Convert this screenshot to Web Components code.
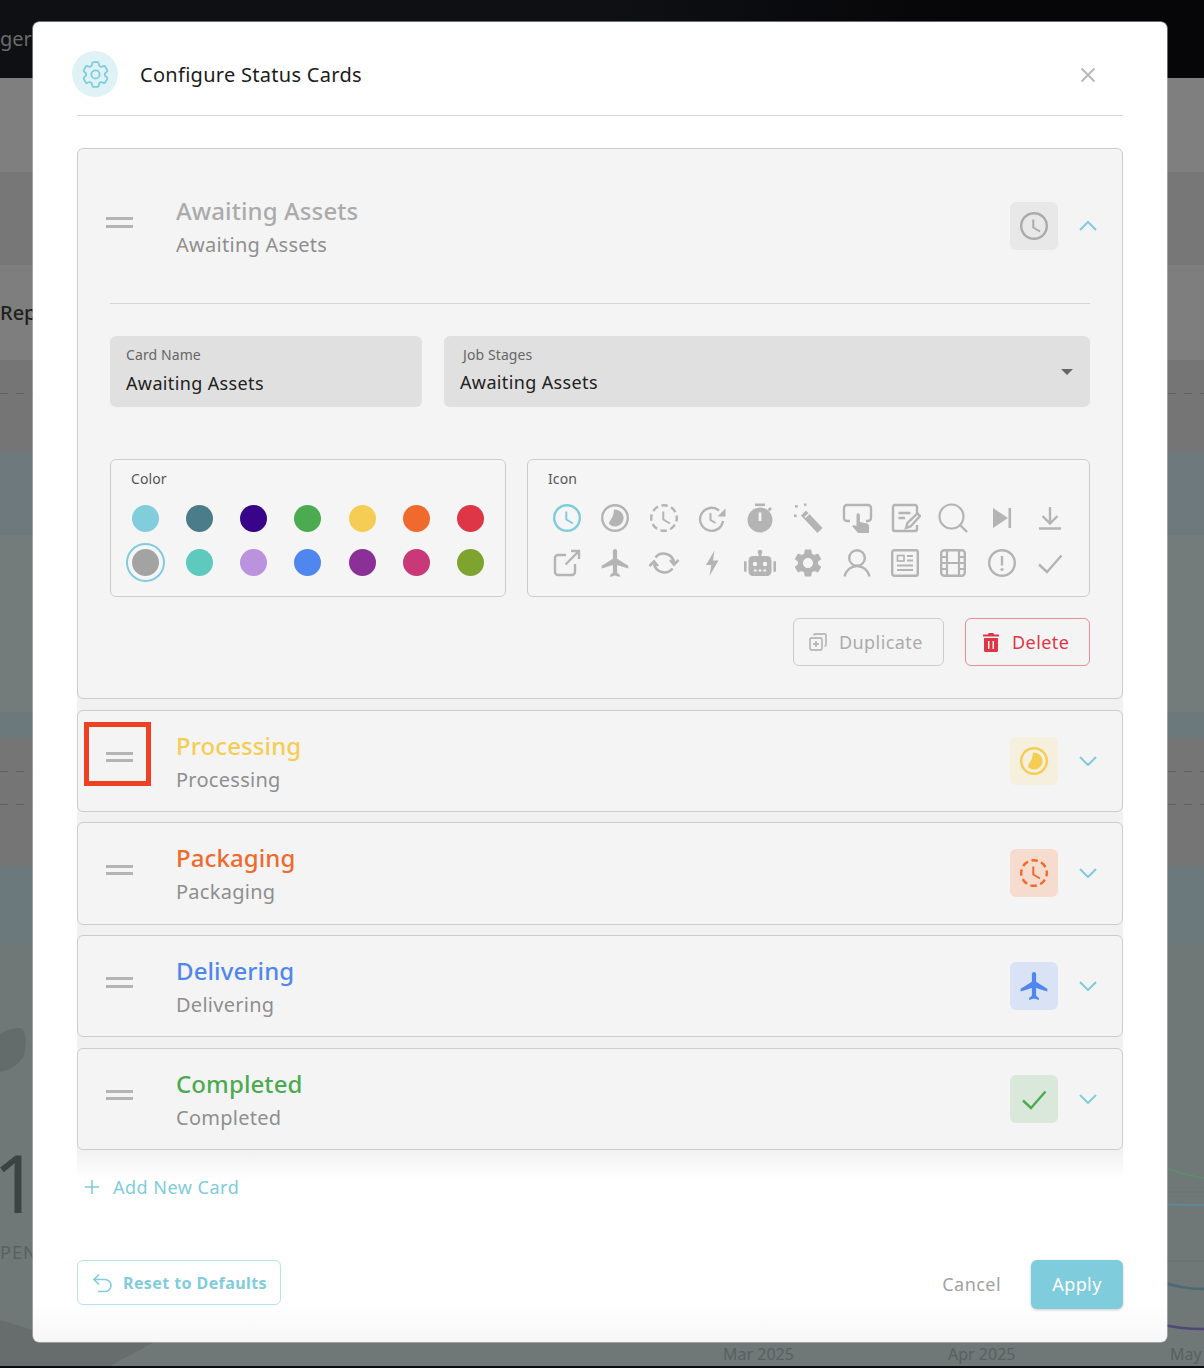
<!DOCTYPE html>
<html lang="en">
<head>
<meta charset="utf-8">
<title>Configure Status Cards</title>
<style>
  html, body { margin: 0; padding: 0; }
  body { width: 1204px; height: 1368px; overflow: hidden; font-family: "Noto Sans", sans-serif; background: #0b0c10; position: relative; }
</style>
</head>
<body>
<page-backdrop></page-backdrop>
<config-dialog>
  <status-card title="Awaiting Assets" sub="Awaiting Assets" color="#ababab" tint="#e8e8e8" icon="clock" open>
    <card-editor></card-editor>
  </status-card>
  <status-card title="Processing" sub="Processing" color="#f5cd55" tint="#f5efdd" icon="pie" marked></status-card>
  <status-card title="Packaging" sub="Packaging" color="#f06a2d" tint="#f6dccf" icon="dashed"></status-card>
  <status-card title="Delivering" sub="Delivering" color="#5087ee" tint="#d9e3f5" icon="plane"></status-card>
  <status-card title="Completed" sub="Completed" color="#4cab51" tint="#d9e8da" icon="check"></status-card>
</config-dialog>

<script>
const HANDS = '<path d="M15.3 9.5V17.5L22 21.5" fill="none" stroke="currentColor" stroke-width="2"/>';
const RING = 'fill="none" stroke="currentColor" stroke-width="2.4"';
const LINE = 'fill="none" stroke="currentColor" stroke-width="2.4"';
const ICONS = {
  clock: `<circle cx="16" cy="16" r="12.8" ${RING}/>${HANDS}`,
  pie: `<circle cx="16" cy="16" r="12.8" ${RING}/><path d="M15 7.6A8.5 8.5 0 1 1 10 22C10 18 14.5 17 15 7.6Z" fill="currentColor"/>`,
  dashed: `<circle cx="16" cy="16" r="12.8" ${RING} stroke-dasharray="6.5 3.55" stroke-dashoffset="3"/>${HANDS}`,
  history: `<path d="M27 19A11.5 11.5 0 1 1 23 8.5" ${LINE}/><path d="M29.5 6.5V14.5H21.5Z" fill="currentColor"/><path d="M14.5 11V18L19.5 21" fill="none" stroke="currentColor" stroke-width="2"/>`,
  stopwatch: `<circle cx="16" cy="18" r="12.5" fill="currentColor"/><rect x="11" y="1.5" width="10" height="2.6" fill="currentColor"/><path d="M24.5 8.5L27 6" stroke="currentColor" stroke-width="2.6"/><rect x="14.6" y="10.5" width="2.8" height="8.5" fill="#f5f5f5"/>`,
  wand: `<path d="M11.5 11L28 28.5" stroke="currentColor" stroke-width="7"/><path d="M13 15.5L17 11.5" stroke="#f5f5f5" stroke-width="1.4"/><rect x="3" y="3" width="2.6" height="2.6" fill="currentColor"/><rect x="12" y="1.5" width="2.4" height="2.4" fill="currentColor"/><rect x="2" y="12.5" width="2.6" height="2.6" fill="currentColor"/>`,
  touch: `<path d="M9 19H6A3 3 0 0 1 3 16V6A3 3 0 0 1 6 3H27A3 3 0 0 1 30 6V16A3 3 0 0 1 27 19H25" ${LINE}/><path d="M15.5 13A1.7 1.7 0 0 1 18.9 13V20L26 21.5A2.5 2.5 0 0 1 28 24V31H17L11 24 13 23 15.5 24Z" fill="currentColor"/>`,
  note: `<path d="M28 11V5A2 2 0 0 0 26 3H6A2 2 0 0 0 4 5V27A2 2 0 0 0 6 29H26A2 2 0 0 0 28 27V23" ${LINE}/><path d="M9.5 11H21.5M9.5 16H16" ${LINE}/><path d="M17 26L18.5 21L28.5 11.5L31 14L21.5 24.5Z" ${LINE} stroke-width="2"/>`,
  search: `<circle cx="14.5" cy="14.5" r="12" fill="none" stroke="currentColor" stroke-width="2.2"/><path d="M23 23L30 30" ${LINE}/>`,
  skip: `<path d="M7 6L22 16 7 26Z" fill="currentColor"/><rect x="22.5" y="6" width="2.6" height="20" fill="currentColor"/>`,
  download: `<path d="M16 5V21M8.5 14L16 21.5 23.5 14M5 26.5H27" ${LINE}/>`,
  external: `<path d="M15 8H7A3 3 0 0 0 4 11V25A3 3 0 0 0 7 28H21A3 3 0 0 0 24 25V17M14.5 17.5L28 4M20 4H28V12" ${LINE}/>`,
  plane: `<path transform="translate(-.1 -.8) scale(1.4)" fill="currentColor" d="M21 16v-2l-8-5V3.5c0-.83-.67-1.5-1.5-1.5S10 2.67 10 3.5V9l-8 5v2l8-2.5V19l-2 1.5V22l3.5-1 3.5 1v-1.5L13 19v-5.5l8 2.5z"/>`,
  sync: `<path d="M7.5 10.5A10.5 10.5 0 0 1 26 15.5M24.5 21.5A10.5 10.5 0 0 1 6 16.5" fill="none" stroke="currentColor" stroke-width="2.6"/><path d="M22 13L26 17.5 30.5 13M1.5 19L6 14.5 10 19" fill="none" stroke="currentColor" stroke-width="2.6"/>`,
  bolt: `<path d="M18.5 3.5L10 18H15.3L13.5 29L22.5 13.5H17Z" fill="currentColor"/>`,
  robot: `<rect x="4.5" y="9" width="23" height="20" rx="4.5" fill="currentColor"/><rect x="14.5" y="5" width="3" height="5" fill="currentColor"/><circle cx="16" cy="5" r="2.3" fill="currentColor"/><rect x="0" y="14" width="2.6" height="11" rx="1.3" fill="currentColor"/><rect x="29.4" y="14" width="2.6" height="11" rx="1.3" fill="currentColor"/><circle cx="11" cy="17" r="2.2" fill="#f5f5f5"/><circle cx="21" cy="17" r="2.2" fill="#f5f5f5"/><path d="M10 23.5H12.6M14.7 23.5H17.3M19.4 23.5H22" stroke="#f5f5f5" stroke-width="2"/>`,
  gear: `<path transform="translate(-.8 -.8) scale(1.4)" fill="currentColor" d="M19.14 12.94c.04-.3.06-.61.06-.94 0-.32-.02-.64-.07-.94l2.03-1.58c.18-.14.23-.41.12-.61l-1.92-3.32c-.12-.22-.37-.29-.59-.22l-2.39.96c-.5-.38-1.03-.7-1.62-.94l-.36-2.54c-.04-.24-.24-.41-.48-.41h-3.84c-.24 0-.43.17-.47.41l-.36 2.54c-.59.24-1.13.57-1.62.94l-2.39-.96c-.22-.08-.47 0-.59.22L2.74 8.87c-.12.21-.08.47.12.61l2.03 1.58c-.05.3-.09.63-.09.94s.02.64.07.94l-2.03 1.58c-.18.14-.23.41-.12.61l1.92 3.32c.12.22.37.29.59.22l2.39-.96c.5.38 1.03.7 1.62.94l.36 2.54c.05.24.24.41.48.41h3.84c.24 0 .44-.17.47-.41l.36-2.54c.59-.24 1.13-.56 1.62-.94l2.39.96c.22.08.47 0 .59-.22l1.92-3.32c.12-.22.07-.47-.12-.61l-2.01-1.58zM12 15.6c-1.98 0-3.6-1.62-3.6-3.6s1.62-3.6 3.6-3.6 3.6 1.62 3.6 3.6-1.62 3.6-3.6 3.6z"/>`,
  user: `<circle cx="16" cy="11" r="7.8" ${LINE}/><path d="M3.5 29.5C5 23 10 19 16 19S27 23 28.5 29.5" ${LINE}/>`,
  news: `<rect x="3.2" y="3.2" width="25.6" height="25.6" rx="2" ${LINE}/><rect x="8.5" y="8.5" width="6.5" height="5.5" fill="none" stroke="currentColor" stroke-width="1.7"/><path d="M18 9H24M18 13.5H24M8 18.5H24M8 23H24" fill="none" stroke="currentColor" stroke-width="2"/>`,
  film: `<rect x="4.2" y="3.2" width="23.6" height="25.6" rx="3" ${LINE}/><path d="M10 4V28M22 4V28M10 16H22M4 10H10M4 16H10M4 22H10M22 10H28M22 16H28M22 22H28" fill="none" stroke="currentColor" stroke-width="2.2"/>`,
  alert: `<circle cx="16" cy="16" r="12.8" ${RING}/><path d="M16 9V18.5" ${LINE}/><circle cx="16" cy="22.5" r="1.6" fill="currentColor"/>`,
  check: `<path d="M5 17.5L13 25L27.5 8.5" ${LINE}/>`
};
const svgIcon = (name, size) => `<svg viewBox="0 0 32 32" width="${size}" height="${size}" aria-hidden="true">${ICONS[name]}</svg>`;

class PageBackdrop extends HTMLElement {
  constructor() {
    super();
    this.attachShadow({ mode: 'open' });
  }
  connectedCallback() {
    this.shadowRoot.innerHTML = `
      <style>
        :host { display: flex; flex-direction: column; width: 1204px; height: 1368px; font-family: "Noto Sans", sans-serif; }
        .band { flex: none; overflow: hidden; white-space: nowrap; }
        .top { height: 78px; color: #6a6a6a; font-size: 20px; line-height: 78px; background-image: linear-gradient(90deg, #0f1014 0 50%, #060608 80%); }
        .dash { height: 1px; background: repeating-linear-gradient(90deg, #5f5f5f 0 8px, transparent 8px 16px); }
        .chart { flex: 1; position: relative; background: #6f7777; }
        .chart span, .chart svg { position: absolute; white-space: nowrap; }
        .stat { left: -7px; top: 190px; font-size: 80px; line-height: 98px; color: #3d4343; }
        .lbl { left: 0; top: 297px; font-size: 18px; letter-spacing: 1px; line-height: 24px; color: #596060; }
        .date { top: 400px; font-size: 16px; line-height: 22px; color: #596060; }
      </style>
      <div class="band top">ger</div>
      <div class="band" style="height:94px;background:#7f7f7f"></div>
      <div class="band" style="height:93px;background:#777"></div>
      <div class="band" style="height:95px;background:#7e7e7e;color:#1f1f1f;font-size:20px;font-weight:500;line-height:96px">Rep</div>
      <div class="band" style="height:92px;background:#757575"><div class="dash" style="margin-top:33px"></div></div>
      <div class="band" style="height:83px;background:#6d797c"></div>
      <div class="band" style="height:177px;background:#737b7b"></div>
      <div class="band" style="height:26px;background:#6b797c"></div>
      <div class="band" style="height:128px;background:#757575"><div class="dash" style="margin-top:33px"></div><div class="dash" style="margin-top:32px"></div></div>
      <div class="band" style="height:77px;background:#6b797c"></div>
      <div class="chart">
        <svg width="1204" height="423" viewBox="0 943 1204 423" style="left:0;top:0">
          <path d="M0 1034C20 1024 30 1024 24 1056C16 1068 8 1070 0 1072Z" fill="#646b6b"/>
          <path d="M0 1320L33 1330H175C150 1345 130 1355 110 1366H0Z" fill="#676d6d"/>
          <path d="M1160 1166C1175 1172 1190 1176 1204 1178" fill="none" stroke="#5f8a6d" stroke-width="2"/>
          <path d="M1160 1204C1175 1205 1190 1205 1204 1205" fill="none" stroke="#5f8a92" stroke-width="2"/>
          <path d="M1160 1281C1175 1287 1190 1289 1204 1289" fill="none" stroke="#4a6b75" stroke-width="2.5"/>
          <path d="M1160 1324C1175 1328 1190 1329 1204 1329" fill="none" stroke="#51457a" stroke-width="2.5"/>
          <path d="M1167 1192H1204M1167 1261H1204" stroke="#687070"/>
        </svg>
        <span class="stat">1</span>
        <span class="lbl">PEN</span>
        <span class="date" style="left:723px">Mar 2025</span>
        <span class="date" style="left:948px">Apr 2025</span>
        <span class="date" style="left:1170px">May</span>
      </div>
      <div class="band" style="height:2px;background:#0b0c10"></div>
    `;
  }
}

class ConfigDialog extends HTMLElement {
  constructor() {
    super();
    this.attachShadow({ mode: 'open' });
  }
  connectedCallback() {
    this.shadowRoot.innerHTML = `
      <style>
        :host {
          position: absolute; left: 33px; top: 22px; width: 1134px; height: 1320px;
          box-sizing: border-box; padding: 0 44px 33px;
          display: flex; flex-direction: column;
          border-radius: 6px; color: #1b1b1b;
          background: linear-gradient(to top, #f7f7f7 0, #fff 40px);
          box-shadow: 0 0 0 .5px #ccc;
          font-family: "Noto Sans", sans-serif;
        }
        header { height: 93px; flex: none; display: flex; align-items: center; border-bottom: 1px solid #d6d6d6; position: relative; }
        .badge { width: 46px; height: 46px; margin: 11px 0 0 -5px; border-radius: 50%; background: #dff2f6; display: flex; align-items: center; justify-content: center; color: #7fccdc; }
        h1 { margin: 12px 0 0 22px; font-size: 20px; font-weight: 400; line-height: 28px; flex: 1; letter-spacing: .29px; }
        .close { margin: 12px 27px 0 0; display: flex; }
        .list { margin-top: 32px; display: flex; flex-direction: column; gap: 10.33px; padding-bottom: 30px; flex: none;
          background: linear-gradient(to bottom, #fff 0 8px, #f1f1f1 8px, #f1f1f1 calc(100% - 30px), #fff 100%); }
        .add { display: flex; align-items: center; height: 24px; margin-top: -4.5px; padding-left: 7px; gap: 13px; font-size: 18px; color: #7fccdc; letter-spacing: .5px; }
        footer { margin-top: auto; display: flex; align-items: flex-start; }
        .reset { width: 204px; height: 45px; box-sizing: border-box; border: 1px solid #b5e3eb; border-radius: 6px; display: flex; align-items: center; padding-left: 14px; gap: 11px; color: #7fccdc; font-size: 16px; font-weight: 700; letter-spacing: .41px; }
        .cancel { margin-left: auto; height: 49px; line-height: 49px; font-size: 18px; color: #a2a2a2; letter-spacing: .45px; }
        .apply { margin-left: 30px; width: 92px; height: 49px; line-height: 49px; text-align: center; background: #7fccdc; color: #fff; font-size: 18px; border-radius: 6px; box-shadow: 0 1px 3px rgba(0,0,0,.2); letter-spacing: .4px; }
      </style>
      <header>
        <div class="badge"><svg viewBox="0 0 24 24" width="33" height="33" fill="none" stroke="currentColor" stroke-width="1.3"><path d="M9.594 3.94c.09-.542.56-.94 1.11-.94h2.593c.55 0 1.02.398 1.11.94l.213 1.281c.063.374.313.686.645.87.074.04.147.083.22.127.325.196.72.257 1.075.124l1.217-.456a1.125 1.125 0 011.37.49l1.296 2.247a1.125 1.125 0 01-.26 1.431l-1.003.827c-.293.24-.438.613-.431.992a6.759 6.759 0 010 .255c-.007.378.138.75.43.99l1.005.828c.424.35.534.954.26 1.43l-1.298 2.247a1.125 1.125 0 01-1.369.491l-1.217-.456c-.355-.133-.75-.072-1.076.124a6.57 6.57 0 01-.22.128c-.331.183-.581.495-.644.869l-.213 1.28c-.09.543-.56.941-1.11.941h-2.594c-.55 0-1.02-.398-1.11-.94l-.213-1.281c-.062-.374-.312-.686-.644-.87a6.52 6.52 0 01-.22-.127c-.325-.196-.72-.257-1.076-.124l-1.217.456a1.125 1.125 0 01-1.369-.49l-1.297-2.247a1.125 1.125 0 01.26-1.431l1.004-.827c.292-.24.437-.613.43-.992a6.932 6.932 0 010-.255c.007-.378-.138-.75-.43-.99l-1.004-.828a1.125 1.125 0 01-.26-1.43l1.297-2.247a1.125 1.125 0 011.37-.491l1.216.456c.356.133.751.072 1.076-.124.072-.044.146-.087.22-.128.332-.183.582-.495.644-.869l.214-1.281z"/><circle cx="12" cy="12" r="3"/></svg></div>
        <h1>Configure Status Cards</h1>
        <div class="close"><svg width="16" height="16" viewBox="0 0 16 16"><path d="M1.5 1.5L14.5 14.5M14.5 1.5L1.5 14.5" stroke="#b8b8b8" stroke-width="2"/></svg></div>
      </header>
      <div class="list"><slot></slot></div>
      <div class="add"><svg width="16" height="16" viewBox="0 0 16 16"><path d="M8 1V15M1 8H15" stroke="#7fccdc" stroke-width="1.6"/></svg><span>Add New Card</span></div>
      <footer>
        <div class="reset"><svg width="20" height="20" viewBox="0 0 20 20" fill="none" stroke="#7fccdc" stroke-width="1.6"><path d="M2.5 6.5H13A6 6 0 0 1 13 18.5H6M7 1.5L2 6.5 7 11.5"/></svg><span>Reset to Defaults</span></div>
        <div class="cancel">Cancel</div>
        <div class="apply">Apply</div>
      </footer>
    `;
  }
}

class StatusCard extends HTMLElement {
  constructor() {
    super();
    this.attachShadow({ mode: 'open' });
  }
  connectedCallback() {
    const open = this.hasAttribute('open');
    const color = this.getAttribute('color');
    const tint = this.getAttribute('tint');
    const chevron = open ? 'M1 9L9 1L17 9' : 'M1 1L9 9L17 1';
    this.shadowRoot.innerHTML = `
      <style>
        :host { display: block; position: relative; box-sizing: border-box; border: 1px solid #ccc; border-radius: 6px; background: #f4f4f4; }
        :host(:not([open])) { height: 102.33px; }
        .head { display: flex; align-items: center; height: ${open ? 154 : 100}px; padding: 0 25px 0 28px; }
        .drag { width: 27px; height: 10.5px; margin: -7px 43px 0 0; flex: none; border-top: 3.5px solid #b4b4b4; border-bottom: 3.5px solid #b4b4b4; box-sizing: border-box; }
        .text { flex: 1; padding-top: 3px; }
        .title { font-size: 24px; line-height: 33px; font-weight: 500; color: ${color}; letter-spacing: .1px; }
        .sub { font-size: 20px; line-height: 33px; margin-top: 1px; color: #8f8f8f; letter-spacing: .27px; }
        .tile { width: 48px; height: 48px; border-radius: 6px; background: ${tint}; color: ${color}; display: flex; align-items: center; justify-content: center; }
        .chev { margin-left: 21px; display: flex; }
        .mark { position: absolute; left: 6px; top: 11px; width: 67px; height: 64px; box-sizing: border-box; border: 5px solid #ee4124; }
      </style>
      <div class="head">
        <div class="drag"></div>
        <div class="text"><div class="title">${this.getAttribute('title')}</div><div class="sub">${this.getAttribute('sub')}</div></div>
        <div class="tile">${svgIcon(this.getAttribute('icon'), 32)}</div>
        <div class="chev"><svg width="18" height="10" viewBox="0 0 18 10"><path d="${chevron}" fill="none" stroke="#7fccdc" stroke-width="2"/></svg></div>
      </div>
      <slot></slot>
      ${this.hasAttribute('marked') ? '<div class="mark"></div>' : ''}
    `;
  }
}

class CardEditor extends HTMLElement {
  constructor() {
    super();
    this.attachShadow({ mode: 'open' });
  }
  connectedCallback() {
    const colors = ['#81cddc','#4a7c89','#38058a','#4cab51','#f5cd55','#f06a2d','#df3647','#a3a3a3','#5dcabd','#bb92de','#5087ee','#8a3097','#c93877','#7ea32e'];
    const icons = ['clock','pie','dashed','history','stopwatch','wand','touch','note','search','skip','download','external','plane','sync','bolt','robot','gear','user','news','film','alert','check'];
    this.shadowRoot.innerHTML = `
      <style>
        :host { display: block; margin: 0 32px; padding: 32px 0 32.27px; border-top: 1px solid #d6d6d6; }
        .fields { display: flex; gap: 22px; }
        .field { height: 71px; box-sizing: border-box; background: #e0e0e0; border-radius: 6px; padding: 9px 16px 0; position: relative; }
        .name { width: 312px; flex: none; }
        .stages { flex: 1; }
        .label { font-size: 14px; line-height: 20px; color: #666; letter-spacing: .1px; }
        .value { font-size: 18px; line-height: 26px; margin-top: 5px; color: #222; letter-spacing: .37px; }
        .stages .label { padding-left: 3px; }
        .stages .value { margin-top: 4px; }
        .caret { position: absolute; right: 17px; top: 33px; width: 0; height: 0; border: 6px solid transparent; border-top: 6px solid #666; border-bottom: 0; }
        .groups { display: flex; gap: 21px; margin-top: 52px; }
        .group { height: 138px; box-sizing: border-box; border: 1px solid #ccc; border-radius: 6px; background: #f5f5f5; padding-top: 9px; }
        .group .label { padding-left: 20px; color: #555; }
        .colors { width: 396px; flex: none; }
        .dots { display: grid; grid-template-columns: repeat(7, 27px); justify-content: space-between; row-gap: 17px; margin-top: 16px; padding: 0 21px; }
        .dot { width: 27px; height: 27px; border-radius: 50%; }
        .dot.on { box-shadow: 0 0 0 4px #f5f5f5, 0 0 0 6px #7fccdc; }
        .icons { flex: 1; }
        .grid { display: grid; grid-template-columns: repeat(11, 32px); justify-content: space-between; row-gap: 13px; margin-top: 13px; padding: 0 23px; color: #b4b4b4; }
        .grid svg { display: block; }
        .grid .on { color: #7fccdc; }
        .actions { display: flex; justify-content: flex-end; gap: 21px; margin-top: 21px; }
        .btn { height: 48px; box-sizing: border-box; border-radius: 6px; display: flex; align-items: center; font-size: 18px; letter-spacing: .42px; }
        .dup { width: 151px; border: 1px solid #ccc; color: #ababab; padding-left: 15px; gap: 12px; }
        .del { width: 125px; border: 1px solid #e98d96; color: #df3647; padding-left: 17px; gap: 13px; }
      </style>
      <div class="fields">
        <div class="field name"><div class="label">Card Name</div><div class="value">Awaiting Assets</div></div>
        <div class="field stages"><div class="label">Job Stages</div><div class="value">Awaiting Assets</div><div class="caret"></div></div>
      </div>
      <div class="groups">
        <div class="group colors">
          <div class="label">Color</div>
          <div class="dots">${colors.map((c, i) => `<div class="dot${i === 7 ? ' on' : ''}" style="background:${c}"></div>`).join('')}</div>
        </div>
        <div class="group icons">
          <div class="label">Icon</div>
          <div class="grid">${icons.map((n, i) => `<div class="${i === 0 ? 'on' : ''}">${svgIcon(n, 32)}</div>`).join('')}</div>
        </div>
      </div>
      <div class="actions">
        <div class="btn dup"><svg width="18" height="18" viewBox="0 0 18 18" fill="none" stroke="#ababab" stroke-width="1.4"><rect x="1" y="5" width="12" height="12" rx="1.5"/><path d="M5 2.5V2A1 1 0 0 1 6 1H16A1 1 0 0 1 17 2V12A1 1 0 0 1 16 13H15.5M7 8V14M4 11H10"/></svg><span>Duplicate</span></div>
        <div class="btn del"><svg width="16" height="19" viewBox="0 0 16 19"><path fill="#df3647" d="M5.5 0H10.5L11 1.5H16V3.5H0V1.5H5Z"/><path fill="#df3647" fill-rule="evenodd" d="M1 5H15V17.5A1.5 1.5 0 0 1 13.5 19H2.5A1.5 1.5 0 0 1 1 17.5ZM5 8V16H6.5V8ZM9.5 8V16H11V8Z"/></svg><span>Delete</span></div>
      </div>
    `;
  }
}

customElements.define('page-backdrop', PageBackdrop);
customElements.define('config-dialog', ConfigDialog);
customElements.define('status-card', StatusCard);
customElements.define('card-editor', CardEditor);
</script>
</body>
</html>
